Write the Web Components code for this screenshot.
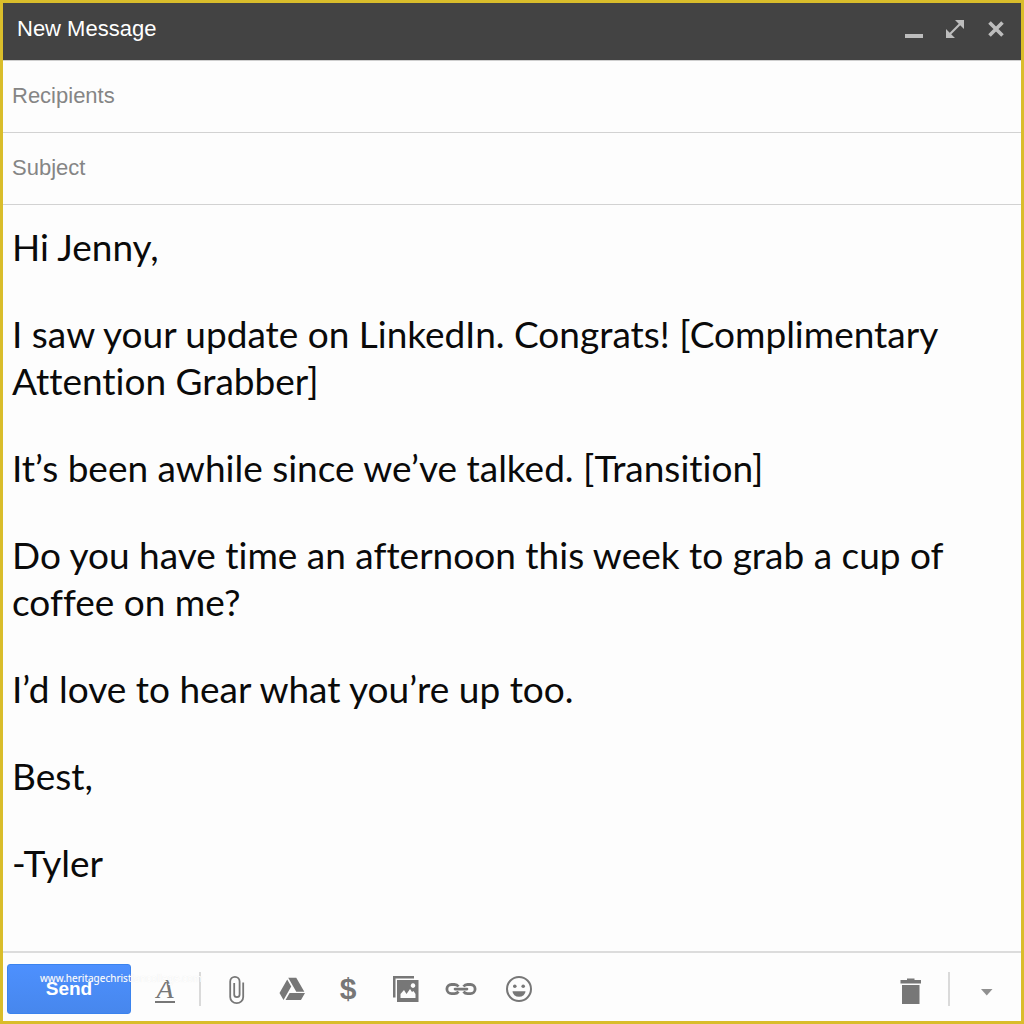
<!DOCTYPE html>
<html lang="en">
<head>
<meta charset="utf-8">
<title>New Message</title>
<style>
  body { margin: 0; font-family: "Liberation Sans", Arial, sans-serif; }
</style>
</head>
<body>
<compose-window>
  <window-bar slot="bar">New Message</window-bar>
  <field-row slot="fields" label="Recipients"></field-row>
  <field-row slot="fields" label="Subject"></field-row>
  <message-body slot="body">
    <p>Hi Jenny,</p>
    <p>I saw your update on LinkedIn. Congrats! [Complimentary Attention Grabber]</p>
    <p>It’s been awhile since we’ve talked. [Transition]</p>
    <p>Do you have time an afternoon this week to grab a cup of coffee on me?</p>
    <p>I’d love to hear what you’re up too.</p>
    <p>Best,</p>
    <p>-Tyler</p>
  </message-body>
  <compose-toolbar slot="tools"></compose-toolbar>
</compose-window>

<script>
const define = (name, html, setup) => {
  const template = document.createElement('template');
  template.innerHTML = html;
  customElements.define(name, class extends HTMLElement {
    constructor() {
      super();
      this.attachShadow({ mode: 'open' }).append(template.content.cloneNode(true));
    }
    connectedCallback() { if (setup) setup(this, this.shadowRoot); }
  });
};

define('compose-window', `
  <style>
    :host { display: flex; flex-direction: column; box-sizing: border-box; min-height: 100vh;
      border: 3px solid #d9bd2b; background: #fdfdfd; }
    main { flex: 1; display: flex; flex-direction: column; }
  </style>
  <slot name="bar"></slot>
  <slot name="fields"></slot>
  <main><slot name="body"></slot></main>
  <slot name="tools"></slot>`);

define('window-bar', `
  <style>
    :host { display: flex; align-items: center; box-sizing: border-box; height: 58px;
      padding: 0 5px 6px 14px; background: #434343; border-bottom: 1px solid #cfcfcf; color: #fff; }
    h1 { flex: 1; margin: 0; font-size: 22px; line-height: 28px; font-weight: 400; }
    button { display: flex; align-items: center; justify-content: center; width: 41px; height: 40px;
      padding: 0; border: 0; background: none; color: #bdbdbd; }
    svg { display: block; }
  </style>
  <h1><slot></slot></h1>
  <button type="button" aria-label="Minimize"><svg width="24" height="24"><path d="M3 17h18v4H3z" fill="currentColor"/></svg></button>
  <button type="button" aria-label="Full screen"><svg width="24" height="24"><path d="M12 3h9v9zM3 12v9h9z" fill="currentColor"/><path d="M6 18 18 6" stroke="currentColor" stroke-width="2.2"/></svg></button>
  <button type="button" aria-label="Close"><svg width="24" height="24"><path d="M5.500 5.500l13 13M18.500 5.500l-13 13" stroke="currentColor" stroke-width="3.600"/></svg></button>`);

define('field-row', `
  <style>
    :host { display: block; border-bottom: 1px solid #d2d2d2; }
    label { display: block; }
    input { display: block; box-sizing: border-box; width: 100%; height: 71px; margin: 0; padding: 0 9px 2px;
      border: 0; outline: 0; background: none; font: inherit; font-size: 22px; color: #222; }
    input::placeholder { color: #858585; opacity: 1; }
  </style>
  <label><input type="text"></label>`, (host, root) => {
  const input = root.querySelector('input');
  input.placeholder = host.getAttribute('label');
  input.setAttribute('aria-label', host.getAttribute('label'));
});

define('message-body', `
  <style>
    :host { display: block; flex: 1; padding: 18px 9px; outline: 0; color: #0a0a0a;
      font-family: Lato, sans-serif; font-size: 37px; line-height: 47px;
      font-variant-ligatures: no-common-ligatures; }
    ::slotted(p) { margin: 0 0 40px; }
    ::slotted(p:last-child) { margin: 0; }
  </style>
  <slot></slot>`, host => {
  host.setAttribute('contenteditable', 'true');
  host.setAttribute('spellcheck', 'false');
  host.setAttribute('role', 'textbox');
  host.setAttribute('aria-multiline', 'true');
  host.setAttribute('aria-label', 'Message body');
});

define('tool-button', `
  <style>
    :host { display: block; width: 56px; }
    button { display: flex; align-items: center; justify-content: center; width: 100%; height: 48px;
      padding: 0; border: 0; background: none; color: #777; font-family: inherit; }
  </style>
  <button type="button"><slot></slot></button>`, (host, root) => {
  root.querySelector('button').setAttribute('aria-label', host.getAttribute('label'));
});

define('compose-toolbar', `
  <style>
    :host { display: flex; align-items: center; position: relative; box-sizing: border-box; height: 70px;
      padding: 4px 7px 0 4px; border-top: 2px solid #dcdcdc; }
    .send { width: 124px; height: 50px; padding: 0; border: 1px solid #3b83ee; border-radius: 3px;
      background: linear-gradient(#4d90fe, #4787ed); color: #fff; font: bold 19px "Liberation Sans", Arial, sans-serif; }
    .format { width: 68px; }
    .letter { font: italic 28px/25px "Liberation Serif", serif; border-bottom: 2px solid #777; padding: 0 1px; }
    .money { font-weight: bold; font-size: 30px; line-height: 34px; }
    hr { width: 2px; height: 34px; margin: 0 7px 0 0; border: 0; background: #dadada; }
    .gap { flex: 1; }
    svg { display: block; fill: currentColor; }
    .line { fill: none; stroke: currentColor; }
    .mark { position: absolute; left: 37px; top: 18px; font: 10px/14px "Noto Sans", sans-serif;
      color: #fff; text-shadow: 0 0 1px #c8c8c866; pointer-events: none; }
    .trash { width: 74px; }
    .more { width: 57px; }
  </style>
  <button class="send" type="button">Send</button>
  <tool-button class="format" label="Formatting options"><span class="letter">A</span></tool-button>
  <hr>
  <tool-button label="Attach files">
    <svg width="40" height="40"><path class="line" stroke-width="1.800" d="M27.200 13.500V28a6.500 6.200 0 0 1-13 0V12.500a4.700 4.700 0 0 1 9.400 0V25.500a2.700 2.700 0 0 1-5.400 0V14"/></svg>
  </tool-button>
  <tool-button label="Insert from Drive">
    <svg width="40" height="40"><path transform="translate(6.150 6.350) scale(1.175)" d="M7.710 3.500L1.150 15l3.430 6 6.550-11.500zM9.730 15l-3.430 6h13.120l3.430-6zM22.280 14L15.420 2H8.580l6.860 12z"/></svg>
  </tool-button>
  <tool-button label="Send money"><span class="money">$</span></tool-button>
  <tool-button label="Insert photo">
    <svg width="40" height="40"><path d="M9 7h21v2.500H11.500v19H9z"/><path fill-rule="evenodd" d="M13 11h21.500v22H13zM16.500 29h15v-4l-2-3-1.500 1-2-3-3.500 5-2.500-4-3.500 4zM29 14.300a2.300 2.300 0 1 0 .01 0z"/></svg>
  </tool-button>
  <tool-button label="Insert link">
    <svg width="40" height="40"><path class="line" stroke-width="2.800" d="M18.500 17.500c-1-1.300-2.300-2-4-2H11.500a4.600 4.600 0 0 0 0 9.200h3c1.700 0 3-.7 4-2M23.500 17.500c1-1.300 2.300-2 4-2h3a4.600 4.600 0 0 1 0 9.200h-3c-1.700 0-3-.7-4-2"/><path class="line" stroke-width="2.600" stroke-linecap="round" d="M15 20.100h12"/></svg>
  </tool-button>
  <tool-button label="Insert emoji">
    <svg width="40" height="40"><circle class="line" cx="23" cy="20" r="12" stroke-width="2"/><circle cx="18.800" cy="17.200" r="1.800"/><circle cx="27.200" cy="17.200" r="1.800"/><path d="M16.500 22.300h13a6.500 5.500 0 0 1-13 0z"/></svg>
  </tool-button>
  <span class="gap"></span>
  <tool-button class="trash" label="Discard draft">
    <svg width="40" height="40"><path d="M9.500 11H16V9.500h7.500V11H30v3.500H9.500zM11 16h17.500v19H11z"/></svg>
  </tool-button>
  <hr>
  <tool-button class="more" label="More options">
    <svg width="40" height="40"><path d="M15 20h11.500l-5.750 6.500z" fill="#909090"/></svg>
  </tool-button>
  <span class="mark">www.heritagechristiancollege.com</span>`);
</script>
</body>
</html>
